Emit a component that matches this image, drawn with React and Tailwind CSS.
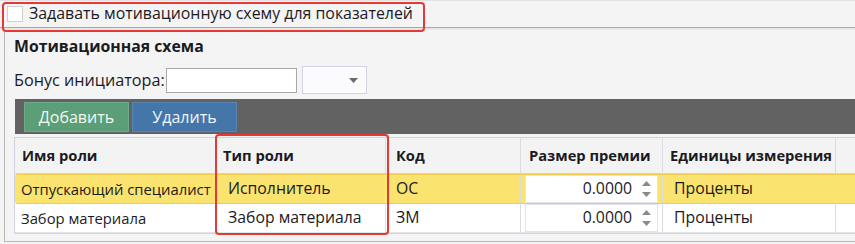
import { useState } from 'react';

const rows = [
  { name: 'Отпускающий специалист', type: 'Исполнитель', code: 'ОС', amount: '0.0000', unit: 'Проценты', selected: true },
  { name: 'Забор материала', type: 'Забор материала', code: 'ЗМ', amount: '0.0000', unit: 'Проценты', selected: false },
];

const Spinner = () => (
  <div className="flex flex-col items-center gap-[6px] pr-[6px]">
    <svg width="9" height="5" viewBox="0 0 9 5"><path d="M4.5 0 L9 5 L0 5 Z" fill="#8a8a8a" /></svg>
    <svg width="9" height="5" viewBox="0 0 9 5"><path d="M0 0 L9 0 L4.5 5 Z" fill="#8a8a8a" /></svg>
  </div>
);

const App = () => {
  const [checked, setChecked] = useState(false);

  return (
    <div className="relative w-[855px] h-[244px] overflow-hidden bg-[#f4f4f4] text-[#1b1b1f] font-['Open_Sans',sans-serif]">
      {/* Top option row */}
      <div className="h-[30px] border-t border-[#e2e2e2] border-b-2 border-b-[#e6e6e6]">
        <div className="flex items-center h-full pl-[7px] gap-[6px] border-b border-[#a9a9a9]">
          <button
            onClick={() => setChecked(!checked)}
            className="w-[16px] h-[16px] bg-white border border-[#d0d0d0]"
          />
          <span className="text-[15.9px] leading-none">Задавать мотивационную схему для показателей</span>
        </div>
      </div>

      {/* Motivation panel */}
      <div className="ml-[4px] h-[212px] border-l border-b border-[#b8b8b8] pl-[9px] pt-[6px]">
        <div className="text-[15.8px] font-bold leading-[21px]">Мотивационная схема</div>

        <div className="flex items-center h-[28px] mt-[9px]">
          <span className="text-[16.2px]">Бонус инициатора:</span>
          <input className="ml-[1px] w-[131px] h-[25px] bg-white border border-[#a9a9a9] outline-none" />
          <div className="ml-[5px] w-[65px] h-[28px] bg-[#fbfbfd] border border-[#d3d3e3] flex items-center justify-end pr-[8px]">
            <svg width="9" height="5" viewBox="0 0 9 5"><path d="M0 0 L9 0 L4.5 5 Z" fill="#6a6a6a" /></svg>
          </div>
        </div>

        {/* Toolbar */}
        <div className="mt-[5px] ml-[1px] h-[35px] bg-[#626262] flex items-center pl-[9px] gap-[3px]">
          <button className="w-[105px] h-[30px] bg-[#5b9e78] border border-[#6cad88] text-[#f2f7f2] text-[16px]">Добавить</button>
          <button className="w-[105px] h-[30px] bg-[#4576aa] border border-[#5584b5] text-[#f2f5fa] text-[16px]">Удалить</button>
        </div>

        {/* Table */}
        <div className="mt-[3px] w-[900px] border border-[#d3d3df] bg-white">
          <div className="grid grid-cols-[199px_172px_135px_142px_173px_1fr] h-[36px] bg-[#f3f3f4] border-b border-[#d3d3df] text-[14.7px] font-bold">
            <div className="flex items-center pl-[7px] border-r border-[#f3f3f4]">Имя роли</div>
            <div className="flex items-center pl-[9px] border-r border-[#dcdce4]">Тип роли</div>
            <div className="flex items-center pl-[10px] border-r border-[#dcdce4]">Код</div>
            <div className="flex items-center pl-[8px] border-r border-[#dcdce4]">Размер премии</div>
            <div className="flex items-center pl-[7px] border-r border-[#dcdce4]">Единицы измерения</div>
            <div />
          </div>

          {rows.map((row, i) => (
            <div
              key={i}
              className={
                row.selected
                  ? 'grid grid-cols-[199px_172px_135px_142px_173px_1fr] h-[30px] bg-[#fae36e] border-y border-[#f2cb4c] rounded-l-[3px] text-[15.8px]'
                  : 'grid grid-cols-[199px_172px_135px_142px_173px_1fr] h-[29px] bg-white border-b border-[#e2e2ea] text-[15.8px]'
              }
            >
              <div className="flex items-center pl-[6px] whitespace-nowrap overflow-hidden text-[14.8px]">{row.name}</div>
              <div className="flex items-center pl-[14px] border-r border-[#e2e2ea]">{row.type}</div>
              <div className="flex items-center pl-[10px] border-r border-[#dcdce4]">{row.code}</div>
              <div className="flex items-center pl-[4px] pr-[4px] border-r border-[#dcdce4]">
                <div className="flex items-center justify-end w-full h-[28px] bg-white border border-[#e4e4ea]">
                  <span className="mr-[10px]">{row.amount}</span>
                  <Spinner />
                </div>
              </div>
              <div className="flex items-center pl-[11px] border-r border-[#dcdce4]">{row.unit}</div>
              <div />
            </div>
          ))}
        </div>
      </div>

      {/* Highlight annotations */}
      <div className="absolute left-[2px] top-[2px] w-[423px] h-[30px] border-2 border-[#e53935] rounded-[4px] pointer-events-none" />
      <div className="absolute left-[215px] top-[134px] w-[174px] h-[101px] border-2 border-[#e53935] rounded-[4px] pointer-events-none" />
    </div>
  );
};

export default App;
